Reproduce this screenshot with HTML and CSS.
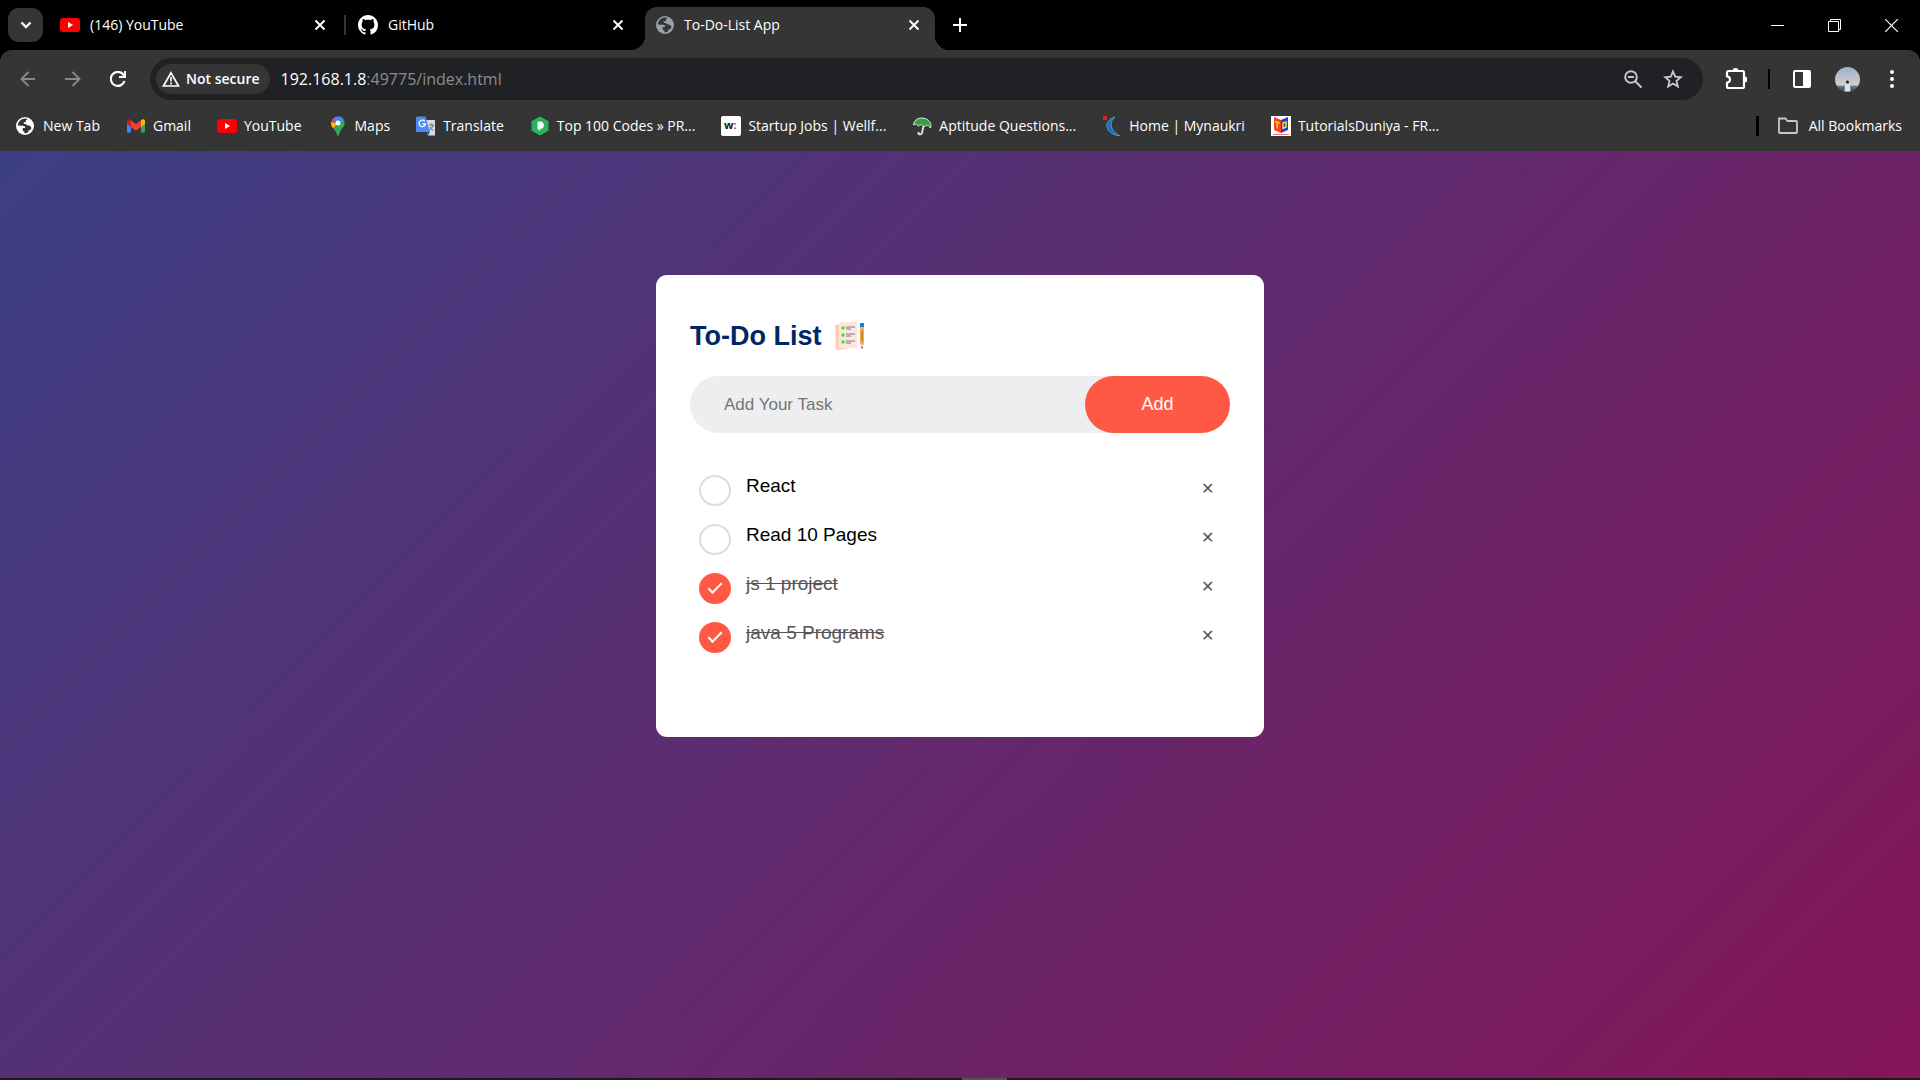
FILE: index.html
```html
<!DOCTYPE html>
<html lang="en">
<head>
<meta charset="utf-8">
<title>To-Do-List App</title>
<link rel="stylesheet" href="styles.css">
</head>
<body>
<svg class="defs" aria-hidden="true">
  <symbol id="close" viewBox="0 0 12 12"><path d="M1.500 1.500l9 9M10.500 1.500l-9 9" fill="none" stroke="currentColor" stroke-width="1.900"/></symbol>
  <symbol id="youtube" viewBox="0 0 20 20"><rect y="3" width="20" height="14" rx="3" fill="#f00"/><path d="M8 7v6l5-3z" fill="#fff"/></symbol>
  <symbol id="globe" viewBox="0 0 18 18"><circle cx="9" cy="9" r="9" fill="currentColor"/><path d="M1.800 8.500 7 8.700c1.800.2 2.300 1 2.200 2.300H6.800v3l1.600.4v1.900c3 .2 4.300-1 4.200-3 1.800 0 2.600-1 2.800-2.600-1-2.200-3-2.700-5-2.400V7H7.800V5.200h2V3.600L11.500 2C7 .3 2.200 3.500 1.800 8.500z" fill="#353535"/></symbol>
</svg>
<header class="browser">
  <div class="tabstrip">
    <button class="tab-search" aria-label="Search tabs"><svg width="12" height="8" viewBox="0 0 12 8"><path d="M1.500 1.500 6 6l4.500-4.500" fill="none" stroke="#fff" stroke-width="2.400"/></svg></button>
    <div class="tab"><svg class="icon"><use href="#youtube"/></svg><span class="tab-title">(146) YouTube</span><button class="tab-close" aria-label="Close tab"><svg width="12" height="12"><use href="#close"/></svg></button></div>
    <div class="tab divided"><svg class="icon" viewBox="0 0 16 16"><path fill="#fff" d="M8 0C3.580 0 0 3.580 0 8c0 3.540 2.290 6.530 5.470 7.590.4.070.55-.17.55-.38 0-.19-.01-.82-.01-1.490-2.010.37-2.530-.49-2.690-.94-.09-.23-.48-.94-.82-1.130-.28-.15-.68-.52-.01-.53.63-.01 1.080.58 1.230.82.72 1.210 1.870.87 2.330.66.070-.52.28-.87.51-1.070-1.780-.2-3.640-.89-3.640-3.950 0-.87.31-1.590.82-2.150-.08-.2-.36-1.020.08-2.120 0 0 .67-.21 2.200.82.64-.18 1.320-.27 2-.27s1.360.09 2 .27c1.530-1.040 2.200-.82 2.200-.82.44 1.100.16 1.920.08 2.120.51.56.82 1.270.82 2.150 0 3.070-1.870 3.750-3.650 3.950.29.25.54.73.54 1.480 0 1.070-.01 1.930-.01 2.200 0 .21.15.46.55.38A8.010 8.010 0 0 0 16 8c0-4.420-3.580-8-8-8z"/></svg><span class="tab-title">GitHub</span><button class="tab-close" aria-label="Close tab"><svg width="12" height="12"><use href="#close"/></svg></button></div>
    <div class="tab active"><svg class="icon globe-muted"><use href="#globe"/></svg><span class="tab-title">To-Do-List App</span><button class="tab-close" aria-label="Close tab"><svg width="12" height="12"><use href="#close"/></svg></button></div>
    <button class="new-tab" aria-label="New tab"><svg width="14" height="14"><path d="M7 0v14M0 7h14" stroke="#fff" stroke-width="2"/></svg></button>
    <div class="window-controls">
      <button aria-label="Minimize"><svg width="13" height="13"><path d="M0 6.500h13" stroke="#fff"/></svg></button>
      <button aria-label="Restore"><svg width="13" height="13"><path d="M.5 2.500h10v10H.5zM2.500 2.500v-2h10v10h-2" fill="none" stroke="#fff"/></svg></button>
      <button aria-label="Close"><svg width="13" height="13"><path d="M0 0l13 13M13 0 0 13" stroke="#fff" stroke-width="1.200"/></svg></button>
    </div>
  </div>
  <div class="toolbar">
    <button class="nav" aria-label="Back"><svg width="16" height="16"><path d="M15 8H2M8.500 1 1.500 8l7 7" fill="none" stroke="#888" stroke-width="1.900"/></svg></button>
    <button class="nav" aria-label="Forward"><svg width="16" height="16"><path d="M0 8h14M7.500 1l7 7-7 7" fill="none" stroke="#888" stroke-width="1.900"/></svg></button>
    <button class="nav" aria-label="Reload"><svg width="16" height="16"><path d="M14.500 10A7 7 0 1 1 13 3.200L15 5.500" fill="none" stroke="#fff" stroke-width="2.200"/><path d="M16 0v7H9V5h5V0z" fill="#fff"/></svg></button>
    <div class="omnibox">
      <button class="security"><svg width="18" height="16"><path d="M9 1.800 16.500 15H1.500z" fill="none" stroke="#fff" stroke-width="1.700"/><path d="M9 6v4.500M9 11.500v2" stroke="#fff" stroke-width="1.600"/></svg>Not secure</button>
      <span class="url">192.168.1.8<span class="url-path">:49775/index.html</span></span>
      <button aria-label="Zoom"><svg width="20" height="20"><circle cx="8" cy="8" r="5.800" fill="none" stroke="#c7c7c7" stroke-width="2"/><path d="M5 8h6M12 12l6.500 6.500" stroke="#c7c7c7" stroke-width="2"/></svg></button>
      <button aria-label="Bookmark this page"><svg width="20" height="20" viewBox="0 0 20 20"><path d="M10 2.500l2.200 5.200 5.600.5-4.300 3.700 1.300 5.500L10 14.500l-4.800 2.900 1.300-5.500-4.300-3.700 5.600-.5z" fill="none" stroke="#c7c7c7" stroke-width="1.900"/></svg></button>
    </div>
    <div class="actions">
      <button aria-label="Extensions"><svg width="22" height="22" viewBox="0 0 22 22"><path d="M2 4.500q0-1.500 1.500-1.500h14q1.500 0 1.500 1.500v14q0 1.500-1.500 1.500h-14Q2 20 2 18.500v-4a3 3 0 0 0 0-6z" fill="none" stroke="#fff" stroke-width="2.200" stroke-linejoin="round"/><path d="M7.500 3a3 3 0 0 1 6 0zM19.500 8.500a3 3 0 0 1 0 6z" fill="#fff"/></svg></button>
      <span class="rule"></span>
      <button aria-label="Side panel"><svg width="18" height="18"><rect x="1" y="1" width="16" height="16" rx="1" fill="none" stroke="#fff" stroke-width="2"/><path d="M10 1h7v16h-7z" fill="#fff"/></svg></button>
      <button aria-label="Profile"><svg width="25" height="25" viewBox="0 0 25 25"><defs><linearGradient id="sky" x2="0" y2="1"><stop stop-color="#94b3d2"/><stop offset=".72" stop-color="#d8cccb"/><stop offset=".78" stop-color="#66758b"/><stop offset="1" stop-color="#394252"/></linearGradient></defs><circle cx="12.500" cy="12.500" r="12.500" fill="url(#sky)"/><circle cx="12.500" cy="15" r="1.500" fill="#171a22"/><path d="M9.500 24.500l.5-6c.5-2 4.500-2 5 0l.5 6z" fill="#dce3eb"/></svg></button>
      <button aria-label="Menu"><svg width="6" height="20"><g fill="#fff"><circle cx="3" cy="3" r="2"/><circle cx="3" cy="10" r="2"/><circle cx="3" cy="17" r="2"/></g></svg></button>
    </div>
  </div>
  <nav class="bookmarks" aria-label="Bookmarks">
    <a href="#"><svg class="icon globe-bright"><use href="#globe"/></svg>New Tab</a>
    <a href="#"><svg class="icon" viewBox="0 0 20 20"><path d="M1 5v11.500h4V9z" fill="#4285f4"/><path d="M19 5v11.500h-4V9z" fill="#34a853"/><path d="M1 8V5c0-2 2-2.200 3.300-1.200L5 4.300V11z" fill="#c5221f"/><path d="M5 4.300 10 8l5-3.700V11l-5 3.800L5 11z" fill="#ea4335"/><path d="M15 11V4.300l.7-.5C17 2.800 19 3 19 5v3z" fill="#fbbc04"/></svg>Gmail</a>
    <a href="#"><svg class="icon"><use href="#youtube"/></svg>YouTube</a>
    <a href="#"><svg class="icon" viewBox="0 0 20 20"><path d="M3.200 8A6.800 6.800 0 0 0 5 12l7-8L8 .7A7 7 0 0 0 3.200 8z" fill="#ea4335"/><path d="M8 .7A7 7 0 0 1 16 4L10 10 5.500 4A7 7 0 0 1 8 .7z" fill="#4285f4"/><path d="M3.300 6a7 7 0 0 0 2 6.500l4-4.500z" fill="#fbbc04"/><path d="M16 4c2 5-1 7.500-3 10-1 1.500-1.500 3-2 5-.3 1-1.700 1-2 0-.5-2.500-2-4.500-4-7z" fill="#34a853"/><circle cx="10" cy="7" r="2.500" fill="#fff"/></svg>Maps</a>
    <a href="#"><svg class="icon" viewBox="0 0 20 20"><path d="M8 4h11v15.500h-7z" fill="#d9dadd"/><path d="M1 .5h8.500L14 16H1.500Q0 16 0 14.500v-13z" fill="#4c8bf5"/><path d="M8.800 5.300A3.200 3.200 0 1 0 9.500 8H6.500" fill="none" stroke="#fff" stroke-width="1.300"/><path d="M13 9h5M15.500 7.500V9M17 9q-1 4-4 5.500M13.800 11l3.700 4" fill="none" stroke="#61717b"/><path d="M11 16h3l-2 3.500z" fill="#2b58b5"/></svg>Translate</a>
    <a href="#"><svg class="icon" viewBox="0 0 20 20"><path d="M10 .5l8.500 4.700v9.600L10 19.500l-8.500-4.700V5.200z" fill="#2bb35c"/><path d="M7.500 5.500H10a3.800 3.800 0 0 1 0 7.600V15L7.500 13z" fill="#fff"/></svg>Top 100 Codes » PR...</a>
    <a href="#"><svg class="icon" viewBox="0 0 20 20"><rect width="20" height="20" rx="2" fill="#fff"/><text x="3" y="13" class="w-mark">w<tspan fill="#e33">:</tspan></text></svg>Startup Jobs | Wellf...</a>
    <a href="#"><svg class="icon" viewBox="0 0 20 20"><path d="M1.500 9C2 3 8 1 13 2.500s7 6 5.500 9.500C16 8.500 14 9 12.500 11 10 7.500 7 9 6.500 10.500 5 8 3 8 1.500 9z" fill="#3c9d42" stroke="#d7ecd9"/><path d="M11.500 10 10 17q-1.500 2.500-3.500.5V16" fill="none" stroke="#e1e6e2" stroke-width="1.900"/></svg>Aptitude Questions...</a>
    <a href="#"><svg class="icon" viewBox="0 0 20 20"><path d="M13 1C0 5 3 18 18 20 9 15 6 7 13 1z" fill="#1670bd" stroke="#69a6d8" stroke-width=".8"/><path d="M1 0h4v4H1z" fill="#e02020"/></svg>Home | Mynaukri</a>
    <a href="#"><svg class="icon" viewBox="0 0 20 20"><path d="M0 0h20v20H0z" fill="#fff"/><path d="M3 1l7 3v13l-7-3z" fill="#ff3b30"/><path d="M17 1l-7 3v13l7-3z" fill="#263bdc"/><path d="M4 5.500l4.500 1.500M6.200 6.500v6" stroke="#ffe600" stroke-width="1.600"/><path d="M12 7l3-1v5l-3 1.300z" fill="none" stroke="#ffe600" stroke-width="1.500"/><path d="M2 18.500h16" stroke="#f77"/></svg>TutorialsDuniya - FR...</a>
    <a href="#" class="all"><svg class="icon" viewBox="0 0 20 20"><path d="M1 2.500h6.500l2 2.500H18q1 0 1 1v10q0 1-1 1H2q-1 0-1-1z" fill="none" stroke="#c7c7c7" stroke-width="1.800"/></svg>All Bookmarks</a>
  </nav>
</header>
<main class="page">
  <section class="todo">
    <h1>To-Do List
      <svg width="32" height="32" viewBox="0 0 32 32" aria-hidden="true"><path d="M1 5 15 3l3 25-16 2z" fill="#ffcbbb"/><path d="M5 2h18v26H5z" fill="#ffe6dc"/><g fill="#2df02d"><circle cx="9" cy="8" r="1.800"/><circle cx="9" cy="15" r="1.800"/><circle cx="9" cy="22" r="1.800"/></g><path d="M12 7h9M12 9h5M12 14h9M12 16h5M12 21h9M12 23h5" stroke="#8a6f9c"/><path d="M26 6h4v18h-4z" fill="#ffad3e"/><path d="M28 11v10" stroke="#9a6a32"/><path d="M26 3h4v4h-4z" fill="#0b84f3"/><path d="M26 24h4l-2 5z" fill="#f5c0c4"/><path d="M27 27h2l-1 2z" fill="#444"/></svg>
    </h1>
    <form class="entry">
      <input type="text" aria-label="Add Your Task" placeholder="Add Your Task">
      <button type="button">Add</button>
    </form>
    <ul class="tasks">
      <li><label><input type="checkbox"><span>React</span></label><button aria-label="Delete React">✕</button></li>
      <li><label><input type="checkbox"><span>Read 10 Pages</span></label><button aria-label="Delete Read 10 Pages">✕</button></li>
      <li><label><input type="checkbox" checked><span>js 1 project</span></label><button aria-label="Delete js 1 project">✕</button></li>
      <li><label><input type="checkbox" checked><span>java 5 Programs</span></label><button aria-label="Delete java 5 Programs">✕</button></li>
    </ul>
  </section>
</main>
<footer class="taskbar"><span></span></footer>
</body>
</html>
```
FILE: styles.css
```css
*, *::before, *::after { box-sizing: border-box; }
body {
  margin: 0;
  min-height: 100vh;
  display: flex;
  flex-direction: column;
  font-family: "Liberation Sans", Arial, sans-serif;
  background: #000;
}
button { border: 0; padding: 0; background: none; color: inherit; font: inherit; }
svg { display: block; flex: none; }
.defs { position: absolute; width: 0; height: 0; }
.icon { width: 20px; height: 20px; }

/* Browser frame */
.browser { font: 14px/20px "Open Sans", "Noto Sans", sans-serif; color: #fff; }
.tabstrip { display: flex; height: 50px; padding-left: 8px; }
.tab-search {
  display: grid;
  place-items: center;
  width: 35px;
  height: 34px;
  margin: 8px 7px 0 0;
  border-radius: 11px;
  background: #353535;
}
.tab {
  position: relative;
  display: flex;
  align-items: center;
  gap: 10px;
  width: 290px;
  margin: 7px 0 0 5px;
  padding: 0 19px 7px 5px;
}
.tab + .tab { margin-left: 8px; }
.tab-title { flex: 1; }
.tab.divided::before {
  content: "";
  position: absolute;
  left: -9px;
  top: 8px;
  width: 2px;
  height: 20px;
  background: #353535;
}
.tab + .tab.active {
  margin-left: 2px;
  padding-left: 11px;
  padding-right: 15px;
  border-radius: 12px 12px 0 0;
  background: #353535;
}
.tab.active::before, .tab.active::after {
  content: "";
  position: absolute;
  bottom: 0;
  width: 14px;
  height: 14px;
  background: radial-gradient(circle at 0 0, transparent 14px, #353535 14px);
}
.tab.active::before { right: 100%; }
.tab.active::after { left: 100%; background: radial-gradient(circle at 100% 0, transparent 14px, #353535 14px); }
.globe-muted { color: #9aa0a6; width: 18px; height: 18px; }
.globe-bright { color: #fff; width: 18px; height: 18px; margin-right: 2px; }
.new-tab { display: grid; place-items: center; width: 50px; }
.window-controls { display: flex; margin-left: auto; }
.window-controls button { display: grid; place-items: center; width: 57px; }
.toolbar {
  display: flex;
  align-items: center;
  height: 58px;
  padding: 0 25px 0 20px;
  border-radius: 12px 12px 0 0;
  background: #353535;
}
.nav { margin-right: 29px; }
.nav:nth-child(3) { margin-right: 24px; }
.omnibox {
  flex: 1;
  display: flex;
  align-items: center;
  gap: 20px;
  height: 42px;
  padding: 0 20px 0 6px;
  border-radius: 21px;
  background: #202124;
}
.security {
  display: flex;
  align-items: center;
  gap: 6px;
  height: 30px;
  padding: 0 10px 0 6px;
  margin-right: -9px;
  border-radius: 15px;
  background: #353535;
  font-weight: 600;
}
.url { flex: 1; font-size: 16px; }
.url-path { color: #8d8d8d; }
.actions { display: flex; align-items: center; margin-left: 22px; }
.rule { width: 2px; height: 20px; margin: 0 23px 0 21px; background: #000; }
.actions button + button { margin-left: 24px; }
.actions button:last-child { margin-left: 29px; }
.bookmarks {
  display: flex;
  align-items: center;
  gap: 26px;
  height: 43px;
  padding: 0 18px 7px 16px;
  background: #353535;
}
.bookmarks a { display: flex; align-items: center; gap: 7px; color: #fff; text-decoration: none; white-space: nowrap; }
.bookmarks .all { gap: 11px; margin-left: auto; padding-left: 19px; border-left: 3px solid #000; }
.w-mark { font: 700 11px "Open Sans", sans-serif; fill: #111; }

/* To-do application */
.page {
  flex: 1;
  padding: 124px 20px;
  background: linear-gradient(135deg, #3c3f84, #841558);
}
.todo {
  max-width: 608px;
  margin: 0 auto;
  padding: 44px 34px 74px;
  border-radius: 11px;
  background: #fff;
}
h1 {
  display: flex;
  align-items: center;
  gap: 13px;
  height: 34px;
  margin: 0 0 23px;
  font-size: 27px;
  line-height: 34px;
  color: #002765;
}
.entry { display: flex; height: 57px; margin-bottom: 34px; border-radius: 34px; background: #edeef0; }
.entry input {
  flex: 1;
  min-width: 0;
  padding: 0 0 0 34px;
  border: 0;
  background: none;
  font: 17px "Liberation Sans", Arial, sans-serif;
}
.entry input::placeholder { color: #757575; }
.entry button { width: 145px; border-radius: 34px; background: #ff5945; color: #fff; font-size: 18px; }
.tasks { margin: 0; padding: 0; list-style: none; }
.tasks li { display: flex; align-items: flex-start; height: 49px; padding-top: 8px; }
.tasks label { flex: 1; display: flex; font-size: 19px; line-height: 22px; }
.tasks label span { padding-left: 15px; color: #000; }
.tasks label input {
  appearance: none;
  width: 32px;
  height: 31px;
  margin: 0 0 0 9px;
  border: 2px solid #ddd;
  border-radius: 50%;
}
.tasks input:checked {
  border: 0;
  background: #ff5945;
  display: grid;
  place-items: center;
}
.tasks input:checked::before {
  content: "";
  width: 14px;
  height: 7px;
  margin-top: -4px;
  border: solid #fff;
  border-width: 0 0 2px 2px;
  rotate: -45deg;
}
.tasks input:checked + span { color: #555; text-decoration: line-through; }
.tasks button { width: 45px; height: 28px; color: #555; font-size: 16px; line-height: 28px; }
.taskbar { height: 2px; padding-left: 49px; background: #1b1b1b; }
.taskbar span { display: block; width: 45px; height: 2px; margin: 0 auto; background: #555; }
```
